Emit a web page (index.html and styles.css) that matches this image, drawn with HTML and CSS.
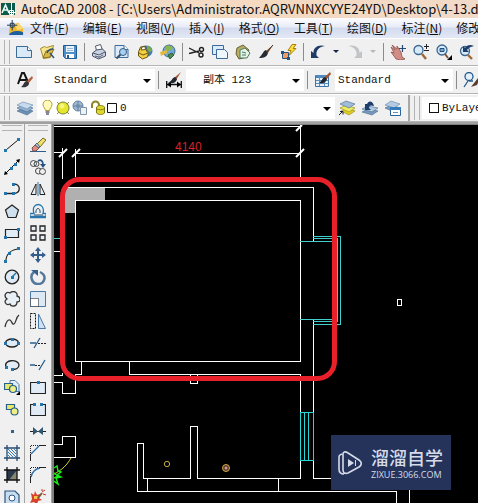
FILE: index.html
```html
<!DOCTYPE html>
<html lang="zh-CN">
<head>
<meta charset="utf-8">
<title>AutoCAD 2008</title>
<link rel="stylesheet" href="styles.css">
</head>
<body>
<header class="titlebar">
  <svg class="app-logo" viewBox="0 0 16 16" aria-hidden="true"><path fill="#0b5a4c" d="M1 2h14v12H1z"/><path stroke="#e9fff8" stroke-width="1.6" fill="none" d="M2 12 5.500 4 9 12M3 9h5"/><path stroke="#fff" fill="none" d="M9.500 9.500h4v4h-4zM11.500 2v13M8 11.500h8"/></svg>
  <span>AutoCAD 2008 - [C:\Users\Administrator.AQRVNNXCYYE24YD\Desktop\4-13.dwg]</span>
</header>

<nav class="menubar">
  <svg class="doc-logo" viewBox="0 0 18 18" aria-hidden="true"><path fill="#f0b72e" d="M3 6 12 3l5 6v7H2z"/><path fill="#ffd96a" d="M8 4h5l4 5-6 2z"/><path fill="#1f5f9c" d="M2 16c2-5 10-5 15-3v3z"/><path stroke="#16324f" fill="#fff" d="M3.500 3.500h4v4h-4zM5.500 0v11M0 5.500h11"/></svg>
  <button>文件(<u>F</u>)</button>
  <button>编辑(<u>E</u>)</button>
  <button>视图(<u>V</u>)</button>
  <button>插入(<u>I</u>)</button>
  <button>格式(<u>O</u>)</button>
  <button>工具(<u>T</u>)</button>
  <button>绘图(<u>D</u>)</button>
  <button>标注(<u>N</u>)</button>
  <button>修改(<u>M</u>)</button>
</nav>

<div class="toolbar" role="toolbar" aria-label="标准">
  <i class="grip"></i>
  <button aria-label="新建"><svg viewBox="0 0 16 16"><path fill="#d9e9f7" stroke="#3b6c98" d="M.5 2.500h11l4 4v7H.5z"/><path fill="#fff" stroke="#3b6c98" d="M11.500 2.500v4h4"/></svg></button>
  <button aria-label="打开"><svg viewBox="0 0 16 16"><path fill="#f6e58d" stroke="#a58c2c" d="m1.500 4.500 4-2 2 1 7-2-3 12-7 1z"/><path fill="#d6b843" stroke="#8d7423" d="m4 14 3-7 8-2-4 8z"/><path stroke="#34507a" stroke-width="1.500" fill="none" d="M8 9c1-3 3-4 6-4M11 9l4 5"/></svg></button>
  <button aria-label="保存"><svg viewBox="0 0 16 16"><path fill="#4d8fc9" stroke="#205a91" d="M1.500 1.500h13v13h-11l-2-2z"/><path fill="#eaf3fb" d="M4 2h8v6H4z"/><path fill="#fff" d="M4 10h8v4H4z"/><path fill="#205a91" d="M5 11h2v3H5z"/><path stroke="#9ab8d2" d="M5 4.500h6M5 6.500h6"/></svg></button>
  <i class="sep"></i>
  <button aria-label="打印"><svg viewBox="0 0 16 16"><path fill="#fff" stroke="#50586a" d="m5.500 7-1-5 5-1.500 2 5.500z"/><path fill="#c9d2e3" stroke="#4a5469" d="m1.500 9 4-3 6-1 3 3v4l-7 3-6-3z"/><path stroke="#4a5469" fill="none" d="m2 9 6 2 6-3M8 11v3"/><path fill="#fff" stroke="#59647c" d="m4 12 4 1 4-2"/></svg></button>
  <button aria-label="打印预览"><svg viewBox="0 0 16 16"><path fill="#dceafa" stroke="#3f6d9c" d="M1 1.500h9l4 4v8H1z"/><path fill="#fff" stroke="#3f6d9c" d="M10 1.500v4h4"/><circle cx="9" cy="8" r="3.500" fill="#a9d0ef" stroke="#315b86"/><path stroke="#35506d" stroke-width="2" d="m6.500 10.500-4 4"/></svg></button>
  <button aria-label="发布"><svg viewBox="0 0 16 16"><circle cx="10" cy="7" r="5.500" fill="#3f7fb5"/><path fill="#79aa4f" d="M10 2c3 0 5 2 5 5l-3 1-2-3z"/><path fill="#f4cf3f" stroke="#685619" d="m1.500 8 2-5 5-1 1 5 2 2-1 4-5 2-4-3z"/><path fill="#fff" stroke="#685619" d="m4 6 1-3 3-.5.500 3z"/><path stroke="#685619" fill="none" d="m2 9 4 2 5-2"/></svg></button>
  <button aria-label="三维 DWF"><svg viewBox="0 0 16 16"><circle cx="9" cy="7" r="6" fill="#76a9cf" stroke="#386993"/><path fill="#8db552" d="M6 2c3-1 6 0 7 2l-4 3-4-1z"/><path fill="#e4b93c" d="M0 8 7 6v3L1 12z"/><path fill="#4e8b50" stroke="#34613e" d="m8 11 4-2 2 2-4 4z"/></svg></button>
  <i class="sep"></i>
  <button aria-label="剪切"><svg viewBox="0 0 16 16"><path stroke="#222" stroke-width="1.300" fill="none" d="m0 4 10 5M0 9.500 10 7"/><circle cx="12.500" cy="5.500" r="2" fill="none" stroke="#222" stroke-width="1.400"/><circle cx="12" cy="11" r="2" fill="none" stroke="#222" stroke-width="1.400"/></svg></button>
  <button aria-label="复制"><svg viewBox="0 0 16 16"><path fill="#dcebf9" stroke="#3c6b99" d="M.5 1.500h11v9H.5z"/><path fill="#eef6fd" stroke="#3c6b99" d="M4.500 5.500h8l3 3v6h-11z"/></svg></button>
  <button aria-label="粘贴"><svg viewBox="0 0 16 16"><path fill="#b8ae62" stroke="#665f31" d="M2 4 8 1l6 5-2 7-8 2-3-5z"/><path fill="#e5f2e4" stroke="#4c7d62" d="m5 6 5-2 5 5-3 5H5z"/><path stroke="#4c7d62" d="m7 8 4 1m-4 2 4 0"/></svg></button>
  <button aria-label="特性匹配"><svg viewBox="0 0 16 16"><path fill="#8c5c34" d="M15 1 8 7l2 2z"/><path stroke="#4b3220" d="m15 1-7 8"/><path fill="#252a33" d="M8 6c-3 1-3 4-7 8 5 0 8-1 9-5z"/></svg></button>
  <button aria-label="块编辑器"><svg viewBox="0 0 16 16"><path fill="#ffdc3c" stroke="#a8820e" d="m11 .5-4 6h3l-2 5 7-7h-3l3-4z"/><path fill="#f09b61" stroke="#24527e" d="M1.500 8.500h6v6h-6z"/><path fill="#24527e" d="M0 7h3v3H0zM6 13h3v3H6z"/></svg></button>
  <i class="sep"></i>
  <button aria-label="放弃"><svg viewBox="0 0 16 16"><path fill="#1f3d66" d="M1 7v7h8L6.500 11.500C6 7 8 3 15 2 8 0 3 4 3.500 9z"/></svg></button>
  <button class="drop" aria-label="放弃列表"><svg viewBox="0 0 6 6"><path d="M0 1h6L3 4z"/></svg></button>
  <button aria-label="重做"><svg viewBox="0 0 16 16"><path fill="#c2c4c6" d="M15 7v7H7l2.500-2.500C10 7 8 3 1 2c7-2 12 2 11.500 7z"/></svg></button>
  <button class="drop faded" aria-label="重做列表"><svg viewBox="0 0 6 6"><path d="M0 1h6L3 4z"/></svg></button>
  <i class="sep"></i>
  <button aria-label="实时平移"><svg viewBox="0 0 16 16"><path fill="#d18d83" stroke="#8e514a" stroke-width=".8" d="m1 3 4 3-3-5 5 4 0-3 4 6 1 5 3 2-4 1-5-1-5-7 3 1z"/><path stroke="#244b78" stroke-width="1.200" d="M12.500 1v7M9 4.500h7"/></svg></button>
  <button aria-label="实时缩放"><svg viewBox="0 0 16 16"><circle cx="5.500" cy="6" r="4.500" fill="#d7eafa" stroke="#3a6690" stroke-width="1.300"/><path stroke="#a36734" stroke-width="2.400" d="m9 10 4 5"/><path stroke="#222" d="M13.500 0v5M11 2.500h5M11 6.500h5"/></svg></button>
  <button aria-label="窗口缩放"><svg viewBox="0 0 16 16"><circle cx="6" cy="6" r="5" fill="#d7eafa" stroke="#3a6690" stroke-width="1.300"/><path fill="#78a6cd" stroke="#1f4f80" d="M4 4.500h4v3H4z"/><path stroke="#805239" stroke-width="2" d="m9 10 3 4"/><path d="M11 16h5v-5z"/></svg></button>
  <button aria-label="缩放上一个"><svg viewBox="0 0 16 16"><circle cx="6" cy="7" r="4.500" fill="#d7eafa" stroke="#3a6690" stroke-width="1.300"/><path stroke="#a36734" stroke-width="2.400" d="m9 11 4 4"/><path fill="#1d3e6a" d="M4 2v6h6L8 6c1-2 3-3 7-4-4-2-7-1-9 2z"/></svg></button>
</div>

<div class="toolbar" role="toolbar" aria-label="样式">
  <i class="grip"></i>
  <label class="tool" for="text-style" aria-label="文字样式"><svg viewBox="0 0 16 16"><path fill="none" stroke="#151515" stroke-width="2" d="M1 12 5 1h2l4 9M3 8h6"/><path fill="#b4613d" d="m15 4-6 6 2 2 5-6z"/><path fill="#34353b" d="M10 9c-3 0-3 4-6 6 5 1 8-1 8-4z"/></svg></label>
  <span class="field"><select id="text-style" class="indent"><option>Standard</option></select><svg class="caret" viewBox="0 0 8 4"><path d="M0 0h8L4 4z"/></svg></span>
  <i class="sep"></i>
  <label class="tool" for="dim-style" aria-label="标注样式"><svg viewBox="0 0 16 16"><path stroke="#111" stroke-width="1.300" d="M.7 9v7M15.300 9v7M1 12.500h14"/><path d="m1 12.500 4-3v6zM15 12.500l-4-3v6z"/><path fill="#a15435" d="M15 0 8 6l2 2z"/><path fill="#20252e" d="M9 5C6 6 6 9 2 11c5 1 8 0 9-4z"/></svg></label>
  <span class="field"><select id="dim-style" class="indent"><option>副本 123</option></select><svg class="caret" viewBox="0 0 8 4"><path d="M0 0h8L4 4z"/></svg></span>
  <i class="sep"></i>
  <label class="tool" for="table-style" aria-label="表格样式"><svg viewBox="0 0 16 16"><path fill="#e5f0fb" stroke="#3c72a8" d="M.5 3.500h13v11H.5z"/><path fill="#4f88bd" d="M1 3h12v3H1z"/><path stroke="#5d8fbe" d="M1 8.500h12M1 11.500h12M4.500 4v10M9.500 4v10"/><path fill="#a15435" d="m15 0-6 6 2 2 5-6z"/><path fill="#20252e" d="M10 5c-3 1-3 4-6 6 5 1 7-1 8-4z"/></svg></label>
  <span class="field"><select id="table-style"><option>Standard</option></select><svg class="caret" viewBox="0 0 8 4"><path d="M0 0h8L4 4z"/></svg></span>
  <i class="sep"></i>
  <button aria-label="多重引线样式"><svg viewBox="0 0 16 16"><circle cx="6" cy="4.500" r="4" fill="#e3effa" stroke="#255b8c" stroke-width="1.300"/><path fill="none" stroke="#255b8c" stroke-width="1.300" d="m5 9-4 6M6 9h4"/><path fill="#5a3a2c" d="m15 6-7 9 6-2 2-5z"/></svg></button>
</div>

<div class="toolbar" role="toolbar" aria-label="图层">
  <i class="grip"></i>
  <label class="tool" for="layer" aria-label="图层特性"><svg viewBox="0 0 16 16"><path fill="#6f91b5" stroke="#46698e" stroke-width=".6" d="m0 11 6-3 10 3-6 4z"/><path fill="#93b2d0" stroke="#46698e" stroke-width=".6" d="m0 8 6-3 10 3-6 4z"/><path fill="#c6dbee" stroke="#6485a6" stroke-width=".6" d="m0 5 6-3 10 3-6 4z"/></svg></label>
  <span class="field layer-field">
    <svg class="layer-icons" viewBox="0 0 80 16" aria-hidden="true">
      <path fill="#fffbb8" stroke="#b59a35" d="M8.500 10.500c0-2-2.500-3-2.500-6a4.500 4.500 0 0 1 9 0c0 3-2.500 4-2.500 6z"/><path stroke="#5b6272" stroke-width="1.500" d="M8.500 12h4M9 14h3"/>
      <path stroke="#8a8a30" d="m20 2 12 12M32 2 20 14"/><circle cx="26" cy="8" r="6" fill="#e6e62c" stroke="#77813a"/><circle cx="25" cy="6" r="2.500" fill="#f6f67c"/>
      <circle cx="41" cy="6" r="5" fill="#9fb9d2" stroke="#66849f"/><path stroke="#66849f" fill="none" d="M41 1v10M36 6h10"/><path fill="#edf2f6" stroke="#8295a6" d="M43.500 7.500h6v7h-6z"/><circle cx="41" cy="6" r="2" fill="#6d8daa"/>
      <path fill="none" stroke="#8c8522" stroke-width="2" d="M55 8V5a3 3 0 0 1 7 0v5"/><path fill="#dfd92b" stroke="#807918" d="M59.500 7c2-2 6-2 8 0v6c-2 2-6 2-8 0z"/><path stroke="#807918" fill="none" d="M60 9c2 1 5 1 7 0"/>
      <path fill="#fff" stroke="#111" d="M70.500 3.500h9v9h-9z"/>
    </svg>
    <select id="layer"><option>0</option></select><svg class="caret" viewBox="0 0 8 4"><path d="M0 0h8L4 4z"/></svg>
  </span>
  <button aria-label="置为当前图层"><svg viewBox="0 0 16 16"><path fill="#e2cf22" stroke="#908515" stroke-width=".6" d="m2 11 6-3 8 3-6 4z"/><path fill="#edeb5e" stroke="#908515" stroke-width=".6" d="m1 8 6-3 9 3-6 4z"/><path fill="#9fbcd8" stroke="#46698e" stroke-width=".6" d="m1 4 6-3 9 3-6 4z"/><path stroke="#123" fill="none" d="m0 15 4-4M1 11.500h3v3"/></svg></button>
  <button aria-label="上一个图层"><svg viewBox="0 0 16 16"><path fill="#7899bb" stroke="#46698e" stroke-width=".6" d="m0 12 6-3 10 2-6 4z"/><path fill="#b2cbe2" stroke="#46698e" stroke-width=".6" d="m0 9 6-3 10 2-6 4z"/><path fill="#1d3e6a" d="M3 4v6h6L7 8c0-3 2-3 5-2-1-5-5-6-7-2z"/></svg></button>
  <button aria-label="图层状态"><svg viewBox="0 0 16 16"><path fill="#7899bb" stroke="#46698e" stroke-width=".6" d="m0 8 6-3 9 3-6 4z"/><path fill="#b2cbe2" stroke="#6485a6" stroke-width=".6" d="m0 5 6-4 9 3-6 4z"/><path fill="#fff" stroke="#2b6299" d="M5.500 7.500h10v8h-10z"/><path fill="#347bbd" d="M5 7h11v3H5z"/><path stroke="#6b8fb2" d="M8 12.500h5"/></svg></button>
  <i class="edge"></i>
  <i class="grip"></i>
  <span class="field color-field"><i class="swatch"></i><select aria-label="颜色"><option>ByLayer</option></select></span>
</div>

<main class="workspace">
  <div class="palette" role="toolbar" aria-label="绘图工具">
    <i class="grip-h"></i>
    <button aria-label="直线"><svg viewBox="0 0 16 16"><path stroke="#111" d="M2 13 14 3"/><path fill="#2474ad" d="M0 12h3v3H0zM13 1h3v3h-3z"/></svg></button>
    <button aria-label="构造线"><svg viewBox="0 0 16 16"><path stroke="#111" d="M1 15 15 1"/><path d="m0 16 1-4 3 3zM16 0l-4 1 3 3z"/><path fill="#2474ad" d="M6 8h3v3H6zM10 4h3v3h-3z"/></svg></button>
    <button aria-label="多段线"><svg viewBox="0 0 16 16"><path fill="none" stroke="#222" stroke-width="1.300" d="M2 12.500h8M10 3c7 0 7 9 0 9.500"/><path fill="#2474ad" d="M0 11h3v3H0zM8 11h3v3H8zM8 2h3v3H8z"/></svg></button>
    <button aria-label="正多边形"><svg viewBox="0 0 16 16"><path fill="#cfe0ee" stroke="#222" stroke-width="1.200" d="m8 2 6.500 5-2.500 7.500H4L1.500 7z"/></svg></button>
    <button aria-label="矩形"><svg viewBox="0 0 16 16"><path fill="#e0ecf6" stroke="#222" stroke-width="1.200" d="M1.500 4.500h13v8h-13z"/><path fill="#2474ad" d="M0 11h3v3H0zM13 3h3v3h-3z"/></svg></button>
    <button aria-label="圆弧"><svg viewBox="0 0 16 16"><path fill="none" stroke="#222" stroke-width="1.200" d="M2 14C2 8 6 3 14 2"/><path fill="#2474ad" d="M0 13h3v3H0zM4 5h3v3H4zM13 0h3v3h-3z"/></svg></button>
    <button aria-label="圆"><svg viewBox="0 0 16 16"><circle cx="8" cy="8" r="6.800" fill="#dfeaf4" stroke="#222" stroke-width="1.300"/><path stroke="#2474ad" stroke-width="1.400" d="m8 8 4-4"/><path fill="#2474ad" d="M7 7h3v3H7z"/></svg></button>
    <button aria-label="修订云线"><svg viewBox="0 0 16 16"><path fill="#e8eff5" stroke="#333" stroke-width="1.300" d="M3 8C-1 5 2 0 6 2c3-3 8-1 7 3 4 1 4 6 0 6 0 5-6 5-7 2-4 2-7-3-3-5z"/></svg></button>
    <button aria-label="样条曲线"><svg viewBox="0 0 16 16"><path fill="none" stroke="#333" stroke-width="1.300" d="M1 14c1-5 3-8 5-7s2 5 4 4 2-7 5-9"/></svg></button>
    <button aria-label="椭圆"><svg viewBox="0 0 16 16"><ellipse cx="8" cy="8" rx="6.500" ry="4" fill="#dfeaf4" stroke="#222" stroke-width="1.300"/><path fill="#2474ad" d="M0 7h3v3H0zM7 3h3v3H7zM13 7h3v3h-3z"/></svg></button>
    <button aria-label="椭圆弧"><svg viewBox="0 0 16 16"><path fill="#e4edf5" stroke="#222" stroke-width="1.300" d="M2 10C-1 2 15 2 15 8c0 3-3 5-7 4"/><path fill="#2474ad" d="M1 9h3v3H1zM7 11h3v3H7z"/></svg></button>
    <button aria-label="插入块"><svg viewBox="0 0 16 16"><path fill="#e3effa" stroke="#4a78a5" d="M6 1.500h5l4 4v7H6z"/><path fill="#e7e96a" stroke="#285f90" stroke-width="1.200" d="M.5 4.500h8v6h-8z"/><circle cx="9" cy="10" r="3.500" fill="#edf083" stroke="#285f90" stroke-width="1.200"/><path d="M12 16h4v-4z"/></svg></button>
    <button aria-label="创建块"><svg viewBox="0 0 16 16"><path fill="#e7e96a" stroke="#285f90" stroke-width="1.200" d="M2.500 3.500h8v5h-8z"/><circle cx="10.500" cy="10.500" r="3.500" fill="#edf083" stroke="#285f90" stroke-width="1.200"/></svg></button>
    <button aria-label="点"><svg viewBox="0 0 16 16"><path fill="#2f6291" d="M7 7h3v3H7z"/></svg></button>
    <button aria-label="图案填充"><svg viewBox="0 0 16 16"><path stroke="#3b7db6" d="m4 4 8 8M7 4l5 5M4 7l5 5M10 4l2 2M4 10l2 2"/><path fill="none" stroke="#234b70" stroke-width="1.300" d="M3 0v16M13 0v16M0 3h16M0 13h16"/></svg></button>
    <button aria-label="渐变色"><svg viewBox="0 0 16 16"><path fill="#29374d" d="M3 3h10v10H3z"/><path fill="#87866e" d="M13 3v10H5z"/><path fill="none" stroke="#111" stroke-width="1.300" d="M3 0v16M13 0v16M0 3h16M0 13h16"/></svg></button>
    <button aria-label="面域"><svg viewBox="0 0 16 16"><path fill="#c9ddf0" stroke="#2b557d" stroke-width="1.200" d="M1 2h10l4 4v9H1z"/><circle cx="8" cy="9" r="3" fill="#fff" stroke="#2b557d"/></svg></button>
  </div>
  <div class="palette" role="toolbar" aria-label="修改工具">
    <i class="grip-h"></i>
    <button aria-label="删除"><svg viewBox="0 0 16 16"><path stroke="#2d5f8e" d="M0 14.500h16"/><path fill="#f0df68" stroke="#756b2c" d="m7 7 6-6 3 2-6 7z"/><path fill="#df8d80" stroke="#874c45" d="m2 11 3-3 4 3-3 3H3z"/><path fill="#b7c9d9" stroke="#567" d="m5 8 2-2 3 4-1 1z"/></svg></button>
    <button aria-label="复制对象"><svg viewBox="0 0 16 16"><circle cx="3.500" cy="4.500" r="3" fill="none" stroke="#444"/><circle cx="6.500" cy="5" r="2.500" fill="none" stroke="#444"/><circle cx="8.500" cy="12" r="3" fill="none" stroke="#444"/><circle cx="12.500" cy="12.500" r="3" fill="#eee" stroke="#444"/><path fill="none" stroke="#265582" stroke-width="1.700" d="M8 2c3-2 5 0 5 4"/><path fill="#265582" d="M10 5h6l-3 4z"/></svg></button>
    <button aria-label="镜像"><svg viewBox="0 0 16 16"><path stroke="#2474ad" d="M8 1v14"/><path fill="#e6edf3" stroke="#222" d="M6 3v10.500H1zM10 3v10.500h5z"/></svg></button>
    <button aria-label="偏移"><svg viewBox="0 0 16 16"><path fill="none" stroke="#2875ad" stroke-width="1.300" d="M0 14.500h16M1 10.500h3c-4-12 12-12 9 0h2c2 0 1 3 0 3H1c-1 0-2-3 0-3z"/><path fill="none" stroke="#244b70" d="M4 12h9M6 10c-1-6 5-6 4 0"/></svg></button>
    <button aria-label="阵列"><svg viewBox="0 0 16 16"><path fill="#e6eff7" stroke="#222" stroke-width="1.300" d="M1 1h5v5H1zM10 1h5v5h-5zM1 10h5v5H1zM10 10h5v5h-5z"/></svg></button>
    <button aria-label="移动"><svg viewBox="0 0 16 16"><path stroke="#345f8d" stroke-width="2" d="M8 2v12M2 8h12"/><path fill="#345f8d" d="m8 0 3 4H5zM8 16l3-4H5zM0 8l4-3v6zM16 8l-4-3v6z"/></svg></button>
    <button aria-label="旋转"><svg viewBox="0 0 16 16"><path fill="none" stroke="#54789c" stroke-width="2.500" d="M10 3c8 4 4 12-2 12S-1 7 4 3"/><path fill="#345f8d" d="M1 1h7v6z"/></svg></button>
    <button aria-label="缩放"><svg viewBox="0 0 16 16"><path fill="#dce9f5" stroke="#4978a5" d="M.5.500h15v15H.5z"/><path fill="#fff" stroke="#111" stroke-dasharray="1 1" d="M.5 7.500h8v8h-8z"/></svg></button>
    <button aria-label="拉伸"><svg viewBox="0 0 16 16"><path fill="#cfe0f0" stroke="#4978a5" d="M8.500 1v14.500h7z"/><path fill="none" stroke="#111" stroke-dasharray="2 1" d="M.5.500h5v15h-5z"/></svg></button>
    <button aria-label="修剪"><svg viewBox="0 0 16 16"><path stroke="#2b5e8d" stroke-width="1.300" d="M0 8h6M4 13l6-10"/><path stroke="#222" stroke-dasharray="2 1" d="M8 8.500h8"/></svg></button>
    <button aria-label="延伸"><svg viewBox="0 0 16 16"><path stroke="#2b5e8d" stroke-width="1.300" d="M0 8h5M9 13l6-10"/><path stroke="#222" stroke-dasharray="2 1" d="M5 8.500h6"/></svg></button>
    <button aria-label="打断于点"><svg viewBox="0 0 16 16"><path fill="#e0ebf5" stroke="#222" stroke-width="1.200" d="M.5 3.500h15v11H.5z"/><path fill="#2474ad" d="M7 2h3v3H7z"/></svg></button>
    <button aria-label="打断"><svg viewBox="0 0 16 16"><path fill="#e0ebf5" stroke="#222" stroke-width="1.200" d="M4 3.500H.5v11h15v-11H12"/><path fill="#2474ad" d="M3 2h3v3H3zM10 2h3v3h-3z"/></svg></button>
    <button aria-label="合并"><svg viewBox="0 0 16 16"><path stroke="#222" d="M0 8.500h16"/><path fill="#31566f" d="m3 4 5 4.500L3 12zM13 4 8 8.500l5 3.500z"/></svg></button>
    <button aria-label="倒角"><svg viewBox="0 0 16 16"><path stroke="#222" fill="none" stroke-dasharray="1 1" d="M.5 8V.5H9"/><path stroke="#2b6ea8" stroke-width="1.300" d="m1 9 8-8"/><path stroke="#222" d="M.5 9v7M9 .5h7"/></svg></button>
    <button aria-label="圆角"><svg viewBox="0 0 16 16"><path stroke="#222" fill="none" stroke-dasharray="1 1" d="M.5 8V.5H9"/><path stroke="#2b6ea8" stroke-width="1.600" fill="none" d="M1 10c1-5 4-8 9-9"/><path stroke="#222" d="M.5 9v7M9 .5h7"/></svg></button>
    <button aria-label="分解"><svg viewBox="0 0 16 16"><path fill="#d7402b" d="m1 4 3 2 1-4 2 4 3-1-1 4 3 2-4 1-1 4-3-3-4 1 2-4z"/><path fill="#f6c248" d="m4 7 4 0-1 3-3 0z"/><path stroke="#7c5936" stroke-width="2" d="m8 9 4-5"/><path stroke="#c0392b" d="m12 3 3-2M13 5l3 1M12 2V0"/></svg></button>
  </div>

  <section class="canvas" aria-label="图形窗口">
    <svg class="drawing" viewBox="54 125 424 378" preserveAspectRatio="xMinYMin slice">
      <!-- north-west wall hatch -->
      <path fill="#b0b0b0" d="M65 187h40v13H76v13H65z"/>
      <!-- walls and dimension lines -->
      <g fill="none" stroke="#fff" shape-rendering="crispEdges">
        <path d="M54 126.500h247M54 152.500h9M76 153.500h225M62.500 148v31M75.500 149v28M300.500 125v53"/>
        <path d="M65 187.500h248.500V241M75.500 200.500h225v161h-225zM313.500 320v158.500H331M300.500 374v104.500h-103v-52h-7v52h-47v-35h-6v48h259V503M409.500 490v13M278.500 479v12M147.500 479v12"/>
        <path d="M129.500 362v12.500h171M81.500 362v12.500h-6v19h-13v-11H54M54 375.500h8.500v-3M190.500 375v8h7v-8M54 251.500h7"/>
        <path d="M54 444.500h8.500v-8h13v21H54M397.500 299.500h4v6h-4z"/>
      </g>
      <path fill="none" stroke="#fff" stroke-width="2" d="m59 157 8-8M72 157l8-8M296 157l8-8M296 131l6-6"/>
      <!-- windows -->
      <g fill="none" stroke="#42cfce" shape-rendering="crispEdges">
        <path d="M300 241.500h33M313 236.500h27.500v88H313M313 238.500h24.500v83H313M300 319.500h33M54 238.500h7"/>
        <path stroke="#22d8d8" d="M300.500 412.500h13v48h-13zM304.500 412v48M308.500 412v48"/>
      </g>
      <text class="dimension" x="175" y="151">4140</text>
      <circle cx="167" cy="464" r="2.700" fill="none" stroke="#c6a544"/>
      <circle cx="226" cy="468" r="3.500" fill="#5a382c" stroke="#d0ab48"/><circle cx="226" cy="468" r="1.500" fill="#c79b94"/>
      <path fill="none" stroke="#d6d629" d="M71 458c-4 7-9 12-17 16"/>
      <path fill="none" stroke="#19f019" stroke-width="1.400" d="m54 468 3-2 1 5 3 1-4 3 4 2-5 1 2 6-4-3M54 473l4 3-4 2"/>
      <rect x="62.500" y="179.500" width="272" height="199" rx="17" fill="none" stroke="#e8202a" stroke-width="5"/>
    </svg>
    <div class="watermark">
      <svg viewBox="0 0 24 24" aria-hidden="true"><path fill="none" stroke="#d6dbe9" stroke-width="1.600" stroke-linejoin="round" d="M5 3v16c0 3 2 4 5 3l11-6c3-2 3-5 0-7L10 2C7 0 5 1 5 3zM4 3C1 4 1 5 1 7v11c0 3 2 5 5 5"/><path fill="#d6dbe9" d="m10 8 6 4-6 4zM17 9h1v6h-1z"/></svg>
      <div><strong>溜溜自学</strong><small>ZIXUE.3066.COM</small></div>
    </div>
  </section>
</main>
</body>
</html>
```
FILE: styles.css
```css
* { box-sizing: border-box; }

body {
  margin: 0;
  height: 100vh;
  display: flex;
  flex-direction: column;
  overflow: hidden;
  background: #f0f0f0;
  color: #111;
  font-family: "Noto Sans CJK SC", sans-serif;
  font-size: 12px;
}

button {
  flex: none;
  padding: 0;
  border: 0;
  background: none;
  color: inherit;
  font: inherit;
}

svg { display: block; flex: none; }

.titlebar {
  flex: none;
  display: flex;
  align-items: center;
  gap: 5px;
  height: 18px;
  overflow: hidden;
  white-space: nowrap;
  font-family: "Noto Sans CJK SC", sans-serif;
  font-size: 13px;
  background: linear-gradient(90deg, #f2e4d4, #f5d9c0 50%, #f1dac8);
}
.titlebar span { line-height: 16px; }
.app-logo { width: 16px; height: 16px; }

.menubar {
  flex: none;
  display: flex;
  align-items: center;
  gap: 14px;
  height: 20px;
  padding-left: 7px;
  overflow: hidden;
  white-space: nowrap;
  background: linear-gradient(#fdfdff, #e8ecf7 45%, #d4dbee 50%, #e3e8f5);
}
.menubar button { line-height: 18px; }
.doc-logo { width: 17px; height: 17px; margin-right: -8px; }

.toolbar {
  flex: none;
  display: flex;
  align-items: center;
  height: 28px;
  overflow: hidden;
  border-top: 1px solid #fff;
  border-bottom: 1px solid #b4b4b4;
}
.toolbar button,
.tool {
  flex: none;
  display: flex;
  justify-content: center;
  align-items: center;
  width: 23px;
  height: 24px;
}
.toolbar .tool { width: 25px; }
.toolbar .drop { width: 14px; }
.toolbar button svg,
.tool svg { width: 16px; height: 16px; }
.toolbar .drop svg { width: 6px; height: 6px; fill: #14264a; }
.toolbar .faded svg { fill: #b8b8b8; }

.grip {
  flex: none;
  width: 6px;
  height: 24px;
  margin: 0 2px 0 4px;
  border: solid #b4b4b4;
  border-width: 0 1px;
}
.sep {
  flex: none;
  width: 1px;
  height: 18px;
  margin: 0 2px 0 3px;
  background: #8c8c8c;
}
.edge {
  flex: none;
  width: 2px;
  height: 28px;
  margin-left: 4px;
  background: #a8a8a8;
}

.field {
  position: relative;
  flex: none;
  display: flex;
  align-items: center;
  width: 118px;
  height: 22px;
  background: #fff;
}
.field select {
  appearance: none;
  flex: 1;
  min-width: 0;
  height: 22px;
  padding: 0 0 0 3px;
  border: 0;
  background: none;
  color: #111;
  font-family: "Liberation Mono", "Noto Sans CJK SC", monospace;
  font-size: 11px;
}
.field .indent { padding-left: 17px; }
.caret {
  position: absolute;
  right: 4px;
  top: 10px;
  width: 8px;
  height: 4px;
  pointer-events: none;
}
.layer-field { width: 298px; }
.layer-icons { width: 80px; height: 16px; }
.color-field { flex: 1; padding-left: 7px; }
.swatch { flex: none; width: 10px; height: 10px; border: 1px solid #111; }

.workspace {
  flex: 1;
  min-height: 0;
  display: flex;
  border-top: 2px solid #a0a0a0;
}
.palette {
  flex: none;
  display: flex;
  flex-direction: column;
  align-items: center;
  width: 25px;
  overflow: hidden;
  border-right: 1px solid #a4a4a4;
}
.palette + .palette { width: 27px; }
.palette button {
  display: flex;
  justify-content: center;
  align-items: center;
  width: 22px;
  height: 22px;
}
.palette button svg { width: 16px; height: 16px; }
.grip-h {
  flex: none;
  width: 20px;
  height: 6px;
  margin: 1px 0 3px;
  border: solid #b4b4b4;
  border-width: 1px 0;
}

.canvas {
  position: relative;
  flex: 1;
  min-width: 0;
  overflow: hidden;
  background: #000;
  border: solid #808080;
  border-width: 1px 0 0 2px;
}
.drawing { width: 100%; height: 100%; }
.dimension {
  fill: #d8202a;
  font-family: "Liberation Sans", sans-serif;
  font-size: 12px;
}

.watermark {
  position: absolute;
  right: 27px;
  bottom: 13px;
  display: flex;
  align-items: center;
  gap: 9px;
  width: 120px;
  height: 55px;
  padding-left: 7px;
  background: #25335b;
  color: #d6dbe9;
}
.watermark svg { width: 24px; height: 24px; }
.watermark strong,
.watermark small { display: block; white-space: nowrap; }
.watermark strong {
  font: 500 18px/24px "Noto Sans CJK SC", sans-serif;
}
.watermark small {
  font: 9px/12px "Open Sans", sans-serif;
}
```
